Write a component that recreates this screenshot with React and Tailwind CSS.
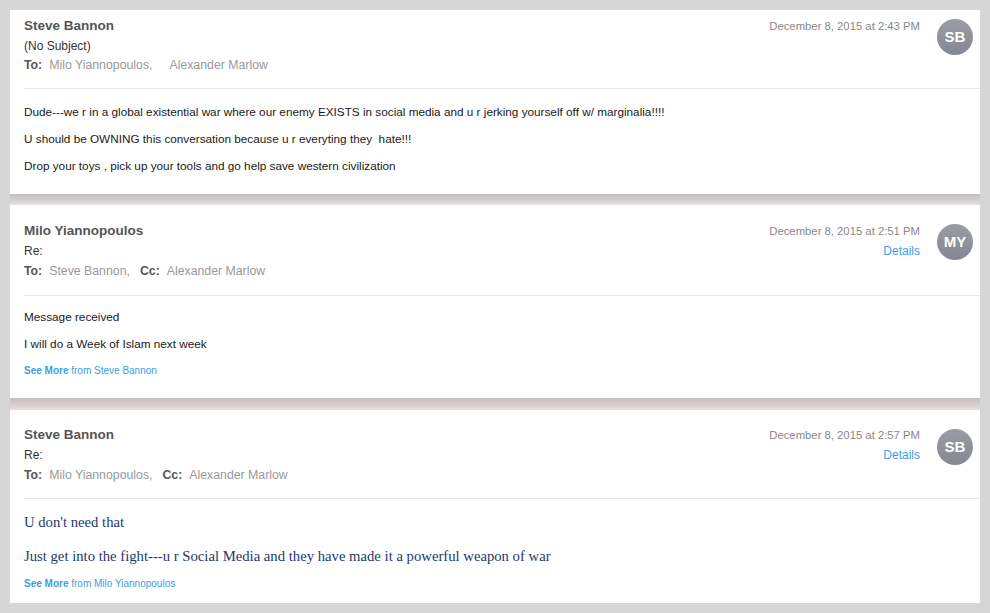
export default function App() {
  const sans = { fontFamily: '"Liberation Sans", Arial, sans-serif' };
  const Avatar = ({ initials }) => (
    <div className="w-[36px] h-[36px] rounded-full bg-gradient-to-b from-[#9a9ca5] to-[#858893] flex items-center justify-center text-white font-bold text-[15px]">
      {initials}
    </div>
  );
  const SeeMore = ({ from }) => (
    <div className="text-[10px] text-[#3b9ee6] leading-[27px]">
      <span className="font-bold">See More</span> from {from}
    </div>
  );
  return (
    <div className="w-[990px] h-[613px] bg-[#d6d6d6] pt-[10px] px-[10px] overflow-hidden" style={sans}>
      {/* Card 1 */}
      <div className="bg-white h-[184px]">
        <div className="flex justify-between pl-[14px] pr-[7px] pt-[6px]">
          <div>
            <div className="text-[13.5px] font-bold text-[#555] leading-[20px]">Steve Bannon</div>
            <div className="text-[12px] text-[#333] leading-[20px]">(No Subject)</div>
            <div className="text-[12.3px] leading-[19px] flex">
              <span className="font-bold text-[#555]">To:</span>
              <span className="text-[#999] ml-[7px]">Milo Yiannopoulos,</span>
              <span className="text-[#999] ml-[17px]">Alexander Marlow</span>
            </div>
          </div>
          <div className="flex items-start">
            <div className="text-right text-[11.3px] leading-[20px] text-[#888]">December 8, 2015 at 2:43 PM</div>
            <div className="ml-[17px] mt-[3px]"><Avatar initials="SB" /></div>
          </div>
        </div>
        <div className="ml-[14px] mt-[13px] border-t border-[#e6e6e6]"></div>
        <div className="pl-[14px] pt-[9px] text-[11.75px] text-[#1a1a1a] leading-[27px]">
          <div>Dude---we r in a global existential war where our enemy EXISTS in social media and u r jerking yourself off w/ marginalia!!!!</div>
          <div>U should be OWNING this conversation because u r everyting they&nbsp; hate!!!</div>
          <div>Drop your toys , pick up your tools and go help save western civilization</div>
        </div>
      </div>
      <div className="h-[11px] bg-gradient-to-b from-[#c2bfc4] via-[#d2cccd] to-[#e6e2e2]"></div>

      {/* Card 2 */}
      <div className="bg-white h-[193px]">
        <div className="flex justify-between pl-[14px] pr-[7px] pt-[16px]">
          <div>
            <div className="text-[13.5px] font-bold text-[#555] leading-[20px]">Milo Yiannopoulos</div>
            <div className="text-[12px] text-[#333] leading-[20px]">Re:</div>
            <div className="text-[12.3px] leading-[20px] flex">
              <span className="font-bold text-[#555]">To:</span>
              <span className="text-[#999] ml-[7px]">Steve Bannon,</span>
              <span className="font-bold text-[#555] ml-[10px]">Cc:</span>
              <span className="text-[#999] ml-[7px]">Alexander Marlow</span>
            </div>
          </div>
          <div className="flex items-start">
            <div className="text-right leading-[20px]">
              <div className="text-[#888] text-[11.3px]">December 8, 2015 at 2:51 PM</div>
              <div className="text-[#3b9ee6] text-[12px]">Details</div>
            </div>
            <div className="ml-[17px] mt-[3px]"><Avatar initials="MY" /></div>
          </div>
        </div>
        <div className="ml-[14px] mt-[14px] border-t border-[#e6e6e6]"></div>
        <div className="pl-[14px] pt-[7px] text-[11.75px] text-[#1a1a1a] leading-[27px]">
          <div>Message received</div>
          <div>I will do a Week of Islam next week</div>
          <SeeMore from="Steve Bannon" />
        </div>
      </div>
      <div className="h-[12px] bg-gradient-to-b from-[#c4bfc2] via-[#d6cdcb] to-[#e6e0df]"></div>

      {/* Card 3 */}
      <div className="bg-white h-[193px]">
        <div className="flex justify-between pl-[14px] pr-[7px] pt-[15px]">
          <div>
            <div className="text-[13.5px] font-bold text-[#555] leading-[20px]">Steve Bannon</div>
            <div className="text-[12px] text-[#333] leading-[20px]">Re:</div>
            <div className="text-[12.3px] leading-[20px] flex">
              <span className="font-bold text-[#555]">To:</span>
              <span className="text-[#999] ml-[7px]">Milo Yiannopoulos,</span>
              <span className="font-bold text-[#555] ml-[10px]">Cc:</span>
              <span className="text-[#999] ml-[7px]">Alexander Marlow</span>
            </div>
          </div>
          <div className="flex items-start">
            <div className="text-right leading-[20px]">
              <div className="text-[#888] text-[11.3px]">December 8, 2015 at 2:57 PM</div>
              <div className="text-[#3b9ee6] text-[12px]">Details</div>
            </div>
            <div className="ml-[17px] mt-[4px]"><Avatar initials="SB" /></div>
          </div>
        </div>
        <div className="ml-[14px] mt-[13px] border-t border-[#e6e6e6]"></div>
        <div className="pl-[14px] pt-[6px]">
          <div className="text-[14.7px] text-[#23396b] leading-[34px]" style={{ fontFamily: '"Liberation Serif", "Times New Roman", serif' }}>
            <div>U don't need that</div>
            <div>Just get into the fight---u r Social Media and they have made it a powerful weapon of war</div>
          </div>
          <div className="text-[10px] text-[#3b9ee6] leading-[22px]">
            <span className="font-bold">See More</span> from Milo Yiannopoulos
          </div>
        </div>
      </div>
    </div>
  );
}
